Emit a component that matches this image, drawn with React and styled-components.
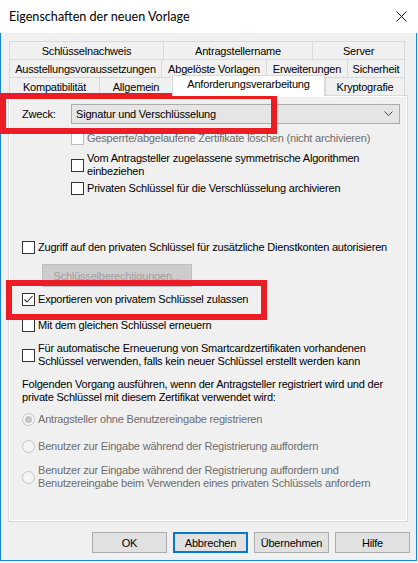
import React from "react";
import styled, { createGlobalStyle } from "styled-components";

const GlobalStyle = createGlobalStyle`
  html, body {
    margin: 0;
    padding: 0;
    background: #ffffff;
  }
  body {
    font-family: "Liberation Sans", Arial, sans-serif;
    font-size: 11px;
    letter-spacing: -0.2px;
    color: #000;
  }
`;

const TAB_ROWS = [
  [
    { label: "Schlüsselnachweis", width: 154 },
    { label: "Antragstellername", width: 149 },
    { label: "Server", width: 93 },
  ],
  [
    { label: "Ausstellungsvoraussetzungen", width: 152 },
    { label: "Abgelöste Vorlagen", width: 105 },
    { label: "Erweiterungen", width: 81 },
    { label: "Sicherheit", width: 58 },
  ],
  [
    { label: "Kompatibilität", width: 90 },
    { label: "Allgemein", width: 73 },
    { label: "Anforderungsverarbeitung", width: 153, active: true },
    { label: "Kryptografie", width: 80 },
  ],
];

const CheckMark = () => (
  <svg width="11" height="11" viewBox="0 0 11 11">
    <polyline points="1.5,5.5 4,8 9.5,2" fill="none" stroke="#333" strokeWidth="1.1" />
  </svg>
);

const Check = ({ checked, disabled }) => (
  <Box $disabled={disabled}>{checked && <CheckMark />}</Box>
);

const Radio = ({ checked }) => (
  <RadioIcon width="13" height="13" viewBox="0 0 13 13">
    <circle cx="6.5" cy="6.5" r="6" fill="#f4f4f4" stroke="#c4c4c4" />
    {checked && <circle cx="6.5" cy="6.5" r="3.5" fill="#c4c4c4" />}
  </RadioIcon>
);

const App = () => {
  return (
    <>
      <GlobalStyle />
      <Window>
        <TitleBar>
          <Title>Eigenschaften der neuen Vorlage</Title>
          <svg width="11" height="11" viewBox="0 0 11 11">
            <path d="M0.5 0.5 L10.5 10.5 M10.5 0.5 L0.5 10.5" stroke="#111" strokeWidth="1" />
          </svg>
        </TitleBar>

        <Body>
          <TabStrip>
            {TAB_ROWS.map((row, i) => (
              <TabRow key={i}>
                {row.map((t, j) => (
                  <Tab
                    key={t.label}
                    $width={t.width}
                    $active={t.active}
                    $last={j === row.length - 1}
                  >
                    {t.label}
                  </Tab>
                ))}
              </TabRow>
            ))}
          </TabStrip>

          <Panel>
            <SelectRow>
              <FieldLabel>Zweck:</FieldLabel>
              <Select>
                <span>Signatur und Verschlüsselung</span>
                <svg width="9" height="6" viewBox="0 0 9 6">
                  <polyline points="0.5,0.5 4.5,4.5 8.5,0.5" fill="none" stroke="#444" strokeWidth="1" />
                </svg>
              </Select>
            </SelectRow>

            <Option $top={8} $indent={49} $disabled>
              <Check disabled />
              <Text>Gesperrte/abgelaufene Zertifikate löschen (nicht archivieren)</Text>
            </Option>
            <Option $top={7} $indent={49}>
              <Check />
              <Text>
                Vom Antragsteller zugelassene symmetrische Algorithmen
                <br />
                einbeziehen
              </Text>
            </Option>
            <Option $top={4} $indent={49}>
              <Check />
              <Text>Privaten Schlüssel für die Verschlüsselung archivieren</Text>
            </Option>

            <Option $top={46}>
              <Check />
              <Text>Zugriff auf den privaten Schlüssel für zusätzliche Dienstkonten autorisieren</Text>
            </Option>
            <DisabledButton>Schlüsselberechtigungen...</DisabledButton>

            <Option $top={6}>
              <Check checked />
              <Text>Exportieren von privatem Schlüssel zulassen</Text>
            </Option>
            <Option $top={13}>
              <Check />
              <Text>Mit dem gleichen Schlüssel erneuern</Text>
            </Option>
            <Option $top={10}>
              <Check />
              <Text>
                Für automatische Erneuerung von Smartcardzertifikaten vorhandenen
                <br />
                Schlüssel verwenden, falls kein neuer Schlüssel erstellt werden kann
              </Text>
            </Option>

            <Paragraph>
              Folgenden Vorgang ausführen, wenn der Antragsteller registriert wird und der
              <br />
              private Schlüssel mit diesem Zertifikat verwendet wird:
            </Paragraph>

            <Option $top={9} $disabled>
              <Radio checked />
              <Text>Antragsteller ohne Benutzereingabe registrieren</Text>
            </Option>
            <Option $top={14} $disabled>
              <Radio />
              <Text>Benutzer zur Eingabe während der Registrierung auffordern</Text>
            </Option>
            <Option $top={11} $disabled>
              <Radio />
              <Text>
                Benutzer zur Eingabe während der Registrierung auffordern und
                <br />
                Benutzereingabe beim Verwenden eines privaten Schlüssels anfordern
              </Text>
            </Option>
          </Panel>

          <ButtonBar>
            <Button>OK</Button>
            <Button $focused>Abbrechen</Button>
            <Button>Übernehmen</Button>
            <Button>Hilfe</Button>
          </ButtonBar>
        </Body>

        <Highlight $left={0} $top={90} $width={277} $height={41} />
        <Highlight $left={6} $top={277} $width={261} $height={40} />
      </Window>
    </>
  );
};

export default App;

const Window = styled.div`
  position: relative;
  width: 417px;
  margin-top: 3px;
`;

const TitleBar = styled.div`
  height: 30px;
  background: #ffffff;
  display: flex;
  align-items: center;
  justify-content: space-between;
  padding: 0 10px 4px 9px;
  box-sizing: border-box;
`;

const Title = styled.div`
  font-family: Lato, "Noto Sans", sans-serif;
  font-size: 12.6px;
  letter-spacing: 0;
  color: #000;
`;

const Body = styled.div`
  background: #f0f0f0;
  border: 1px solid #1883d7;
  border-top: none;
  padding: 8px 0 6px 7px;
  height: 528px;
  box-sizing: border-box;
  display: flex;
  flex-direction: column;
`;

const TabStrip = styled.div`
  margin-left: 1px;
  width: 396px;
  display: flex;
  flex-direction: column;
`;

const TabRow = styled.div`
  display: flex;
  height: 18px;
`;

const Tab = styled.div`
  box-sizing: border-box;
  width: ${(p) => p.$width}px;
  height: ${(p) => (p.$active ? 21 : 18)}px;
  margin-top: ${(p) => (p.$active ? -2 : 0)}px;
  position: ${(p) => (p.$active ? "relative" : "static")};
  z-index: ${(p) => (p.$active ? 1 : "auto")};
  background: ${(p) => (p.$active ? "#ffffff" : "#f0f0f0")};
  border-top: 1px solid #d9d9d9;
  border-left: 1px solid #d9d9d9;
  border-right: ${(p) => (p.$last || p.$active ? "1px solid #d9d9d9" : "none")};
  display: flex;
  align-items: ${(p) => (p.$active ? "flex-start" : "center")};
  padding-top: ${(p) => (p.$active ? 2 : 0)}px;
  justify-content: center;
  white-space: nowrap;
`;

const Panel = styled.div`
  box-sizing: border-box;
  width: 400px;
  height: 427px;
  border: 1px solid #dadada;
  box-shadow: inset 0 0 0 1px #ffffff;
  padding: 8px 0 0 13px;
  display: flex;
  flex-direction: column;
  align-items: flex-start;
`;

const SelectRow = styled.div`
  display: flex;
  align-items: center;
  height: 20px;
`;

const FieldLabel = styled.div`
  width: 49px;
`;

const Select = styled.div`
  box-sizing: border-box;
  width: 329px;
  height: 20px;
  background: #e5e5e5;
  border: 1px solid #acacac;
  display: flex;
  align-items: center;
  justify-content: space-between;
  padding: 0 6px 0 4px;
`;

const Option = styled.div`
  display: flex;
  align-items: center;
  margin-top: ${(p) => p.$top}px;
  margin-left: ${(p) => p.$indent || 0}px;
  color: ${(p) => (p.$disabled ? "#6d6d6d" : "#000")};
`;

const Box = styled.span`
  box-sizing: border-box;
  width: 13px;
  height: 13px;
  flex-shrink: 0;
  margin-right: 3px;
  background: #ffffff;
  border: 1px solid ${(p) => (p.$disabled ? "#bcbcbc" : "#333333")};
  display: flex;
  align-items: center;
  justify-content: center;
`;

const RadioIcon = styled.svg`
  flex-shrink: 0;
  margin-right: 3px;
`;

const Text = styled.span`
  line-height: 13px;
  white-space: nowrap;
`;

const Paragraph = styled.div`
  margin-top: 10px;
  line-height: 13px;
  white-space: nowrap;
`;

const DisabledButton = styled.div`
  box-sizing: border-box;
  margin: 10px 0 0 20px;
  width: 150px;
  height: 23px;
  background: #cccccc;
  border: 1px solid #bfbfbf;
  color: #a0a0a0;
  display: flex;
  align-items: center;
  justify-content: center;
`;

const ButtonBar = styled.div`
  display: flex;
  justify-content: flex-end;
  gap: 6px;
  margin-top: 10px;
  padding-right: 6px;
`;

const Button = styled.div`
  box-sizing: border-box;
  width: 75px;
  height: 21px;
  background: #e1e1e1;
  border: ${(p) => (p.$focused ? "2px solid #0078d7" : "1px solid #adadad")};
  display: flex;
  align-items: center;
  justify-content: center;
`;

const Highlight = styled.div`
  position: absolute;
  box-sizing: border-box;
  left: ${(p) => p.$left}px;
  top: ${(p) => p.$top}px;
  width: ${(p) => p.$width}px;
  height: ${(p) => p.$height}px;
  border: 6px solid #ec1c24;
  pointer-events: none;
`;
